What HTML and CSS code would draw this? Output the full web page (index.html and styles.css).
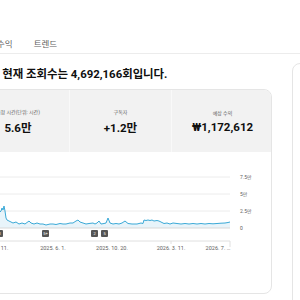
FILE: index.html
```html
<!DOCTYPE html>
<html lang="ko">
<head>
    <meta charset="UTF-8">
    <title>채널 분석</title>
    <link rel="stylesheet" href="styles.css">
</head>
<body>
    <div class="tabs">
        <span class="tab">수익</span>
        <span class="tab">트렌드</span>
    </div>

    <div class="layout">
        <div class="main">
            <h2 class="headline">채널의 현재 조회수는 4,692,166회입니다.</h2>

            <div class="card">
                <div class="stats">
                    <div class="stat">
                        <div class="stat-label">시청 시간(단위: 시간)</div>
                        <div class="stat-value">5.6만</div>
                    </div>
                    <div class="stat">
                        <div class="stat-label">구독자</div>
                        <div class="stat-value">+1.2만</div>
                    </div>
                    <div class="stat">
                        <div class="stat-label">예상 수익</div>
                        <div class="stat-value">₩1,172,612</div>
                    </div>
                </div>

                <svg class="chart" width="306" height="143" viewBox="0 0 306 143">
                    <g class="grid">
                        <line x1="0" y1="25" x2="263" y2="25"/>
                        <line x1="0" y1="42" x2="263" y2="42"/>
                        <line x1="0" y1="59" x2="263" y2="59"/>
                    </g>
                    <polygon class="area" points="0,71 9,69 19,70 26,68 30,65 32,61 34,59 35,56 36,58 37,54 38,59 39,66 40,68 42,69 46,71 49,70 52,72 55,71 58,72 62,69 64,71 67,72 70,71 73,72 76,72 79,73 83,72 86,72 89,72.5 93,71.5 96,72 99,72 103,71 106,71 109,69 111,68 113,70 116,71 119,72 122,71.5 126,71 128,72 130,71 132,69 134,72 137,71.5 139,71 141,66 143,71 146,72 149,71.5 152,72 155,71 158,69 161,71.5 165,72 170,72 174,71 176,71.5 177,68 179,68.5 181,68 183,68.5 185,68 187,69 190,68.5 192,69 194,70 197,71.5 200,71 203,72 206,71 210,71.5 214,72 218,71.5 222,72 226,71.5 230,72 234,71.5 238,72 242,71.5 246,71.8 250,71.5 254,71.2 258,71 261,70.5 263,70 263,76 0,76"/>
                    <polyline class="line" points="0,71 9,69 19,70 26,68 30,65 32,61 34,59 35,56 36,58 37,54 38,59 39,66 40,68 42,69 46,71 49,70 52,72 55,71 58,72 62,69 64,71 67,72 70,71 73,72 76,72 79,73 83,72 86,72 89,72.5 93,71.5 96,72 99,72 103,71 106,71 109,69 111,68 113,70 116,71 119,72 122,71.5 126,71 128,72 130,71 132,69 134,72 137,71.5 139,71 141,66 143,71 146,72 149,71.5 152,72 155,71 158,69 161,71.5 165,72 170,72 174,71 176,71.5 177,68 179,68.5 181,68 183,68.5 185,68 187,69 190,68.5 192,69 194,70 197,71.5 200,71 203,72 206,71 210,71.5 214,72 218,71.5 222,72 226,71.5 230,72 234,71.5 238,72 242,71.5 246,71.8 250,71.5 254,71.2 258,71 261,70.5 263,70"/>
                    <line class="base" x1="0" y1="76" x2="263" y2="76"/>

                    <g class="ylabels">
                        <text x="273" y="27">7.5만</text>
                        <text x="273" y="44">5만</text>
                        <text x="273" y="61">2.5만</text>
                        <text x="273" y="78">0</text>
                    </g>

                    <g class="markers">
                        <rect x="29" y="78" width="7" height="7" rx="1"/>
                        <rect x="75" y="78" width="7" height="7" rx="1"/>
                        <rect x="124" y="78" width="7" height="7" rx="1"/>
                        <rect x="134" y="78" width="7" height="7" rx="1"/>
                    </g>
                    <g class="marker-text">
                        <text x="32.5" y="83.3">3</text>
                        <text x="78.5" y="83.3">5+</text>
                        <text x="127.5" y="83.3">2</text>
                        <text x="137.5" y="83.3">5</text>
                    </g>

                    <g class="axis">
                        <line x1="0" y1="89" x2="263" y2="89"/>
                        <line x1="204" y1="89" x2="204" y2="92"/>
                        <line x1="263" y1="89" x2="263" y2="95"/>
                    </g>
                    <g class="xlabels">
                        <text x="27" y="97.5">2025. 2. 11.</text>
                        <text x="86" y="97.5">2025. 6. 1.</text>
                        <text x="145" y="97.5">2025. 10. 20.</text>
                        <text x="204" y="97.5">2026. 3. 11.</text>
                        <text x="251" y="97.5">2026. 7. …</text>
                    </g>
                </svg>
            </div>
        </div>

        <div class="side">
            <div class="side-title">실시간</div>
            <div class="side-live"><span class="dot"></span> 업데이트 중</div>
            <div class="side-sep"></div>
            <div class="side-big">구독자</div>
            <div class="side-small">현재 구독자 수</div>
            <div class="side-pill">실시간 수 보기</div>
            <div class="side-sep"></div>
            <div class="side-big">조회수</div>
            <div class="side-small">지난 48시간</div>
            <div class="side-bars"></div>
            <div class="side-small">48시간 전</div>
            <div class="side-small side-gap">인기 콘텐츠</div>
        </div>
    </div>
</body>
</html>
```

FILE: styles.css
```css
body {
    margin: 0;
    width: 300px;
    height: 300px;
    overflow: hidden;
    background: #fff;
    font-family: Roboto, "Noto Sans CJK KR", sans-serif;
    color: #0f0f0f;
}
.tabs {
    display: flex;
    gap: 21px;
    align-items: center;
    height: 54px;
    padding: 32px 0 0 0;
    box-sizing: border-box;
    margin-left: -3px;
    width: 310px;
    border-bottom: 1px solid #ececec;
}
.tab {
    font-size: 8.5px;
    color: #606060;
}
.layout {
    display: flex;
    gap: 20px;
    margin-left: -34px;
}
.main {
    width: 306px;
    flex-shrink: 0;
    padding-top: 13px;
}
.headline {
    margin: 0 0 8px 2px;
    font-size: 11.4px;
    line-height: 14px;
    font-weight: 700;
    white-space: nowrap;
}
.card {
    border: 1px solid #e5e5e5;
    border-radius: 8px;
    overflow: hidden;
    height: 205px;
    box-sizing: border-box;
}
.stats {
    display: grid;
    grid-template-columns: 102px 102px 102px;
    height: 62px;
    background: #f2f2f2;
}
.stat {
    display: flex;
    flex-direction: column;
    align-items: center;
    justify-content: center;
    gap: 4px;
    border-left: 1px solid #f9f9f9;
}
.stat:first-child {
    border-left: none;
}
.stat-label {
    font-size: 5px;
    color: #606060;
}
.stat-value {
    font-size: 11.5px;
    font-weight: 700;
}
.chart {
    display: block;
}
.grid line {
    stroke: #ececec;
    stroke-width: 1;
}
.base {
    stroke: #d8d8d8;
    stroke-width: 1;
}
.area {
    fill: rgba(62, 166, 216, 0.12);
}
.line {
    fill: none;
    stroke: #3aa8d6;
    stroke-width: 1;
    stroke-linejoin: round;
}
.ylabels text {
    font-size: 5px;
    fill: #606060;
}
.markers rect {
    fill: #555;
}
.marker-text text {
    font-size: 4px;
    fill: #fff;
    text-anchor: middle;
}
.axis line {
    stroke: #e0e0e0;
    stroke-width: 1;
}
.xlabels text {
    font-size: 5.5px;
    fill: #606060;
    text-anchor: middle;
}
.side {
    width: 110px;
    flex-shrink: 0;
    margin-top: 9px;
    height: 260px;
    border: 1px solid #e5e5e5;
    border-radius: 8px;
    padding: 6px 10px;
    box-sizing: border-box;
}
.side-title {
    font-size: 7px;
    font-weight: 700;
}
.side-live {
    font-size: 5px;
    color: #606060;
    display: flex;
    align-items: center;
    gap: 2px;
}
.dot {
    width: 4px;
    height: 4px;
    border-radius: 50%;
    background: #3ea6ff;
}
.side-sep {
    height: 1px;
    background: #ececec;
    margin: 20px 0 6px 0;
}
.side-big {
    font-size: 7px;
    font-weight: 700;
}
.side-small {
    font-size: 5px;
    color: #606060;
    margin-top: 2px;
}
.side-pill {
    margin-top: 6px;
    border: 1px solid #ddd;
    border-radius: 8px;
    font-size: 5px;
    padding: 3px 6px;
}
.side-bars {
    height: 8px;
    margin-top: 16px;
    background: linear-gradient(90deg, #3ea6d8 0 4px, transparent 4px);
}
.side-gap {
    margin-top: 10px;
}
```
